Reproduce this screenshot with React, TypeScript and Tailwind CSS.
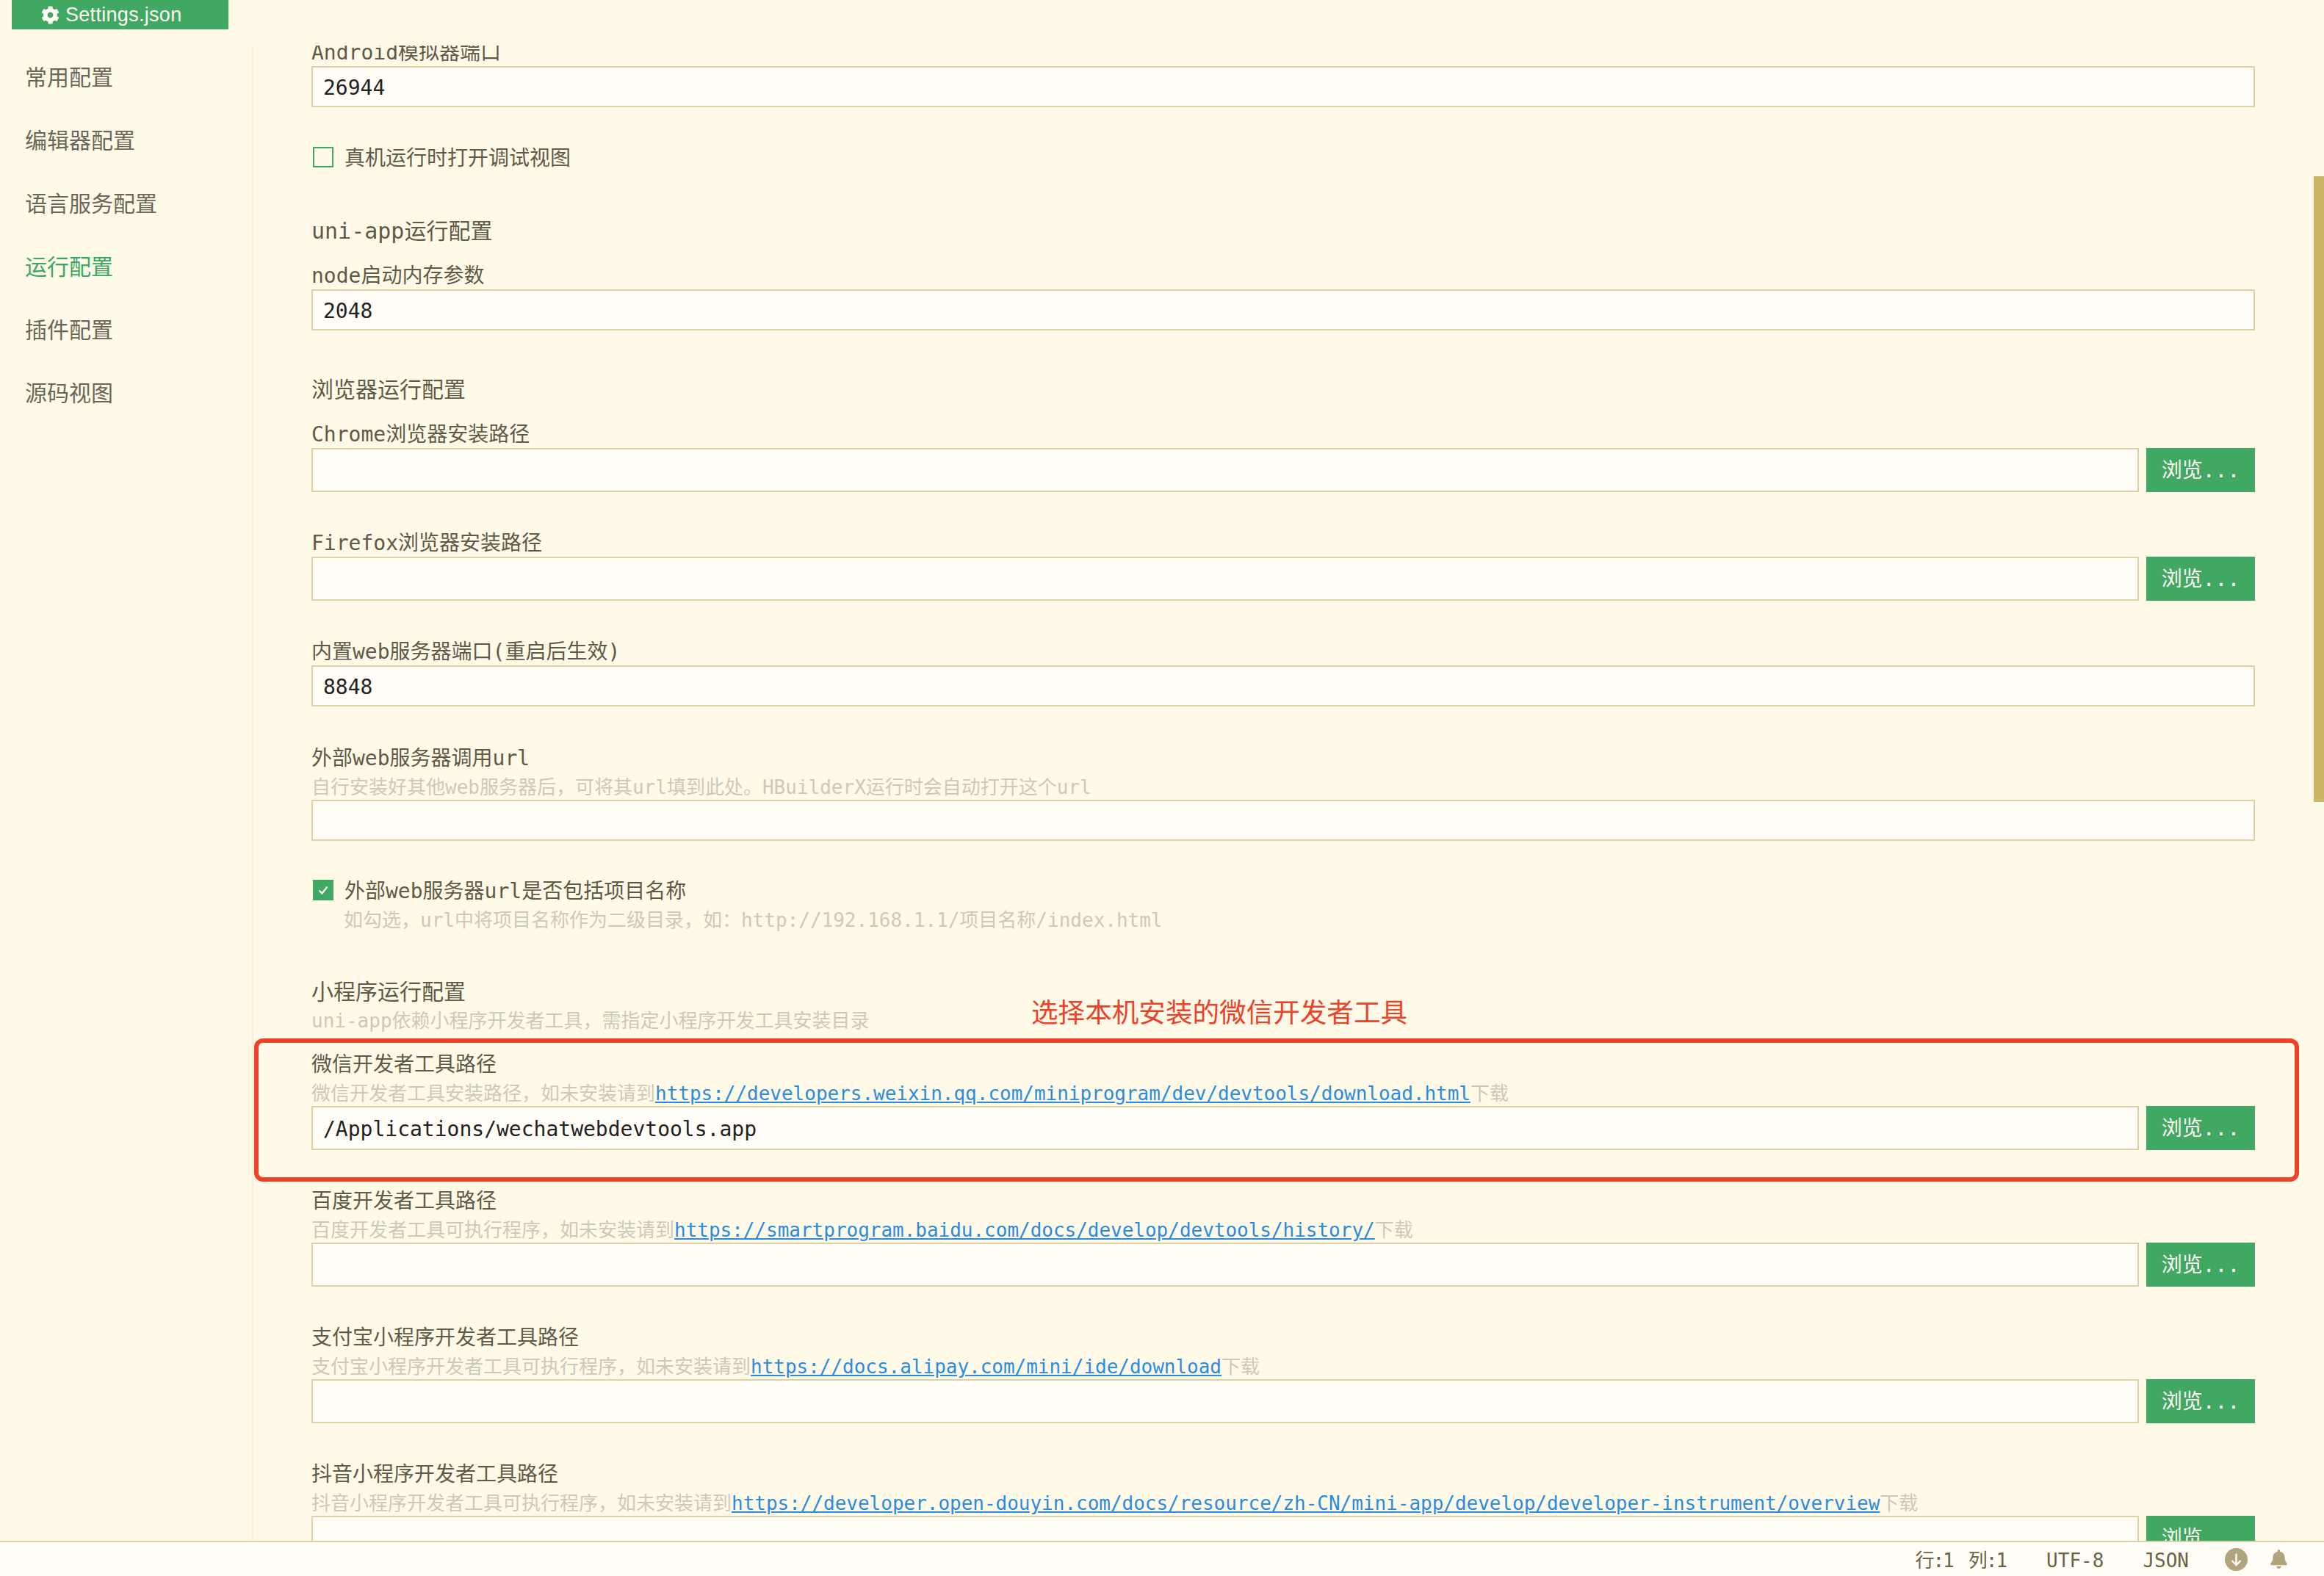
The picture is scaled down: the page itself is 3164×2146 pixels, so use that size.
import { ReactNode } from 'react';
import { FaBell, FaCog } from 'react-icons/fa';

const mono = "font-['DejaVu_Sans_Mono','Noto_Sans_CJK_SC',monospace]";

const menu = ['常用配置', '编辑器配置', '语言服务配置', '运行配置', '插件配置', '源码视图'];

function Label({ children }: { children: ReactNode }) {
  return <div className="h-[40px] text-[28px] leading-[44px] text-[#5f5a46] whitespace-nowrap">{children}</div>;
}

function Desc({ children, indent }: { children: ReactNode; indent?: boolean }) {
  return (
    <div className={`h-[38px] text-[26px] leading-[42px] text-[#cdc9b8] whitespace-nowrap ${indent ? 'pl-[44px]' : ''}`}>
      {children}
    </div>
  );
}

function Link({ children }: { children: ReactNode }) {
  return <a className="tracking-[-0.02px] text-[#2a8be0] underline underline-offset-2">{children}</a>;
}

function SectionTitle({ children }: { children: ReactNode }) {
  return <div className="mt-[59px] h-[40px] text-[30px] leading-[44px] text-[#5f5a46]">{children}</div>;
}

function TextBox({ value, tall }: { value?: string; tall?: boolean }) {
  return (
    <div
      className={`flex-1 border-2 border-[#dcd1a9] bg-[#fffdf6] pl-[14px] text-[28px] text-[#222222] ${
        tall ? 'h-[60px] leading-[60px]' : 'h-[56px] leading-[56px]'
      }`}
    >
      {value}
    </div>
  );
}

function BrowseRow({ value }: { value?: string }) {
  return (
    <div className="flex gap-[10px]">
      <TextBox value={value} tall />
      <button className="h-[60px] w-[148px] bg-[#41a863] text-center text-[28px] leading-[62px] text-[#fffdf6]">
        浏览...
      </button>
    </div>
  );
}

function PathField({ className, label, desc, value }: { className: string; label: string; desc: ReactNode; value?: string }) {
  return (
    <div className={className}>
      <Label>{label}</Label>
      <Desc>{desc}</Desc>
      <BrowseRow value={value} />
    </div>
  );
}

function CheckRow({ className, checked, children }: { className: string; checked?: boolean; children: ReactNode }) {
  return (
    <div className={`flex h-[40px] items-center gap-[15px] pl-[2px] text-[28px] text-[#5f5a46] ${className}`}>
      {checked ? (
        <span className="flex h-[28px] w-[28px] items-center justify-center bg-[#41a863]">
          <svg viewBox="0 0 20 20" className="h-[20px] w-[20px]" fill="none" stroke="#fffdf6" strokeWidth="2.4">
            <path d="M4.5 10.5 L8.5 14.5 L15.5 5.5" />
          </svg>
        </span>
      ) : (
        <span className="h-[28px] w-[28px] border-2 border-[#41a863]" />
      )}
      <span className="pt-[3px]">{children}</span>
    </div>
  );
}

export default function App() {
  return (
    <div className={`relative flex h-[2146px] w-[3164px] flex-col overflow-hidden bg-[#fff9e8] ${mono}`}>
      <div className="h-[62px] shrink-0 pl-[16px]">
        <div className="flex h-[40px] w-[295px] items-center gap-[8px] bg-[#41a863] pl-[40px] font-['Liberation_Sans',sans-serif] text-[27px] tracking-[0.3px] text-[#fffdf6]">
          <FaCog className="h-[25px] w-[25px]" />
          <span>Settings.json</span>
        </div>
      </div>

      <div className="flex min-h-0 flex-1">
        <aside className="w-[345px] shrink-0 border-r-2 border-[#f5eed6]">
          {menu.map((item) => (
            <div
              key={item}
              className={`flex h-[86px] items-center pb-[4px] pl-[34px] font-['Noto_Sans_CJK_SC',sans-serif] text-[30px] ${
                item === '运行配置' ? 'text-[#3aa862]' : 'text-[#6b6758]'
              }`}
            >
              {item}
            </div>
          ))}
        </aside>

        <main className="min-w-0 flex-1 overflow-hidden pl-[79px] pr-[94px]">
          <div className="-mt-[12px]">
            <Label>Android模拟器端口</Label>
            <div className="flex"><TextBox value="26944" /></div>

            <CheckRow className="mt-[48px]">真机运行时打开调试视图</CheckRow>

            <SectionTitle>uni-app运行配置</SectionTitle>
            <div className="mt-[21px]">
              <Label>node启动内存参数</Label>
              <div className="flex"><TextBox value="2048" /></div>
            </div>

            <SectionTitle>浏览器运行配置</SectionTitle>
            <div className="mt-[21px]">
              <Label>Chrome浏览器安装路径</Label>
              <BrowseRow />
            </div>
            <div className="mt-[48px]">
              <Label>Firefox浏览器安装路径</Label>
              <BrowseRow />
            </div>
            <div className="mt-[48px]">
              <Label>内置web服务器端口(重启后生效)</Label>
              <div className="flex"><TextBox value="8848" /></div>
            </div>
            <div className="mt-[49px]">
              <Label>外部web服务器调用url</Label>
              <Desc>自行安装好其他web服务器后，可将其url填到此处。HBuilderX运行时会自动打开这个url</Desc>
              <div className="flex"><TextBox /></div>
            </div>

            <CheckRow className="mt-[47px]" checked>外部web服务器url是否包括项目名称</CheckRow>
            <Desc indent>如勾选，url中将项目名称作为二级目录，如：http://192.168.1.1/项目名称/index.html</Desc>

            <SectionTitle>小程序运行配置</SectionTitle>
            <Desc>uni-app依赖小程序开发者工具，需指定小程序开发工具安装目录</Desc>

            <PathField
              className="mt-[21px]"
              label="微信开发者工具路径"
              value="/Applications/wechatwebdevtools.app"
              desc={<>微信开发者工具安装路径，如未安装请到<Link>https://developers.weixin.qq.com/miniprogram/dev/devtools/download.html</Link>下载</>}
            />
            <PathField
              className="mt-[48px]"
              label="百度开发者工具路径"
              desc={<>百度开发者工具可执行程序，如未安装请到<Link>https://smartprogram.baidu.com/docs/develop/devtools/history/</Link>下载</>}
            />
            <PathField
              className="mt-[48px]"
              label="支付宝小程序开发者工具路径"
              desc={<>支付宝小程序开发者工具可执行程序，如未安装请到<Link>https://docs.alipay.com/mini/ide/download</Link>下载</>}
            />
            <PathField
              className="mt-[48px]"
              label="抖音小程序开发者工具路径"
              desc={<>抖音小程序开发者工具可执行程序，如未安装请到<Link>https://developer.open-douyin.com/docs/resource/zh-CN/mini-app/develop/developer-instrument/overview</Link>下载</>}
            />
          </div>
        </main>
      </div>

      <footer className="flex h-[48px] shrink-0 items-center justify-end border-t-2 border-[#dcd1a9] bg-[#fffdf6] pr-[49px] text-[26px] text-[#6b6446]">
        <span className="pt-[4px] tracking-[-2px]">行:1</span>
        <span className="ml-[21px] pt-[4px] tracking-[-2px]">列:1</span>
        <span className="ml-[55px] pt-[4px]">UTF-8</span>
        <span className="ml-[53px] pt-[4px]">JSON</span>
        <svg viewBox="0 0 31 31" className="ml-[49px] h-[31px] w-[31px]">
          <circle cx="15.5" cy="15.5" r="15.5" fill="#b0a37d" />
          <path d="M15.5 7.5 V23 M9.5 17 L15.5 23 L21.5 17" fill="none" stroke="#fffdf6" strokeWidth="2.4" />
        </svg>
        <FaBell className="ml-[30px] h-[26px] w-[25px] text-[#b0a37d]" />
      </footer>

      {/* annotation drawn over the screenshot */}
      <div className="absolute left-[346px] top-[1414px] h-[195px] w-[2784px] rounded-[12px] border-[6px] border-[#ee4129]" />
      <div className="absolute left-[1404px] top-[1351px] font-['Noto_Sans_CJK_SC',sans-serif] text-[36.6px] leading-[52px] text-[#ee4129]">
        选择本机安装的微信开发者工具
      </div>
      {/* scrollbar thumb */}
      <div className="absolute left-[3150px] top-[240px] h-[852px] w-[14px] bg-[#cdb56a]" />
    </div>
  );
}
